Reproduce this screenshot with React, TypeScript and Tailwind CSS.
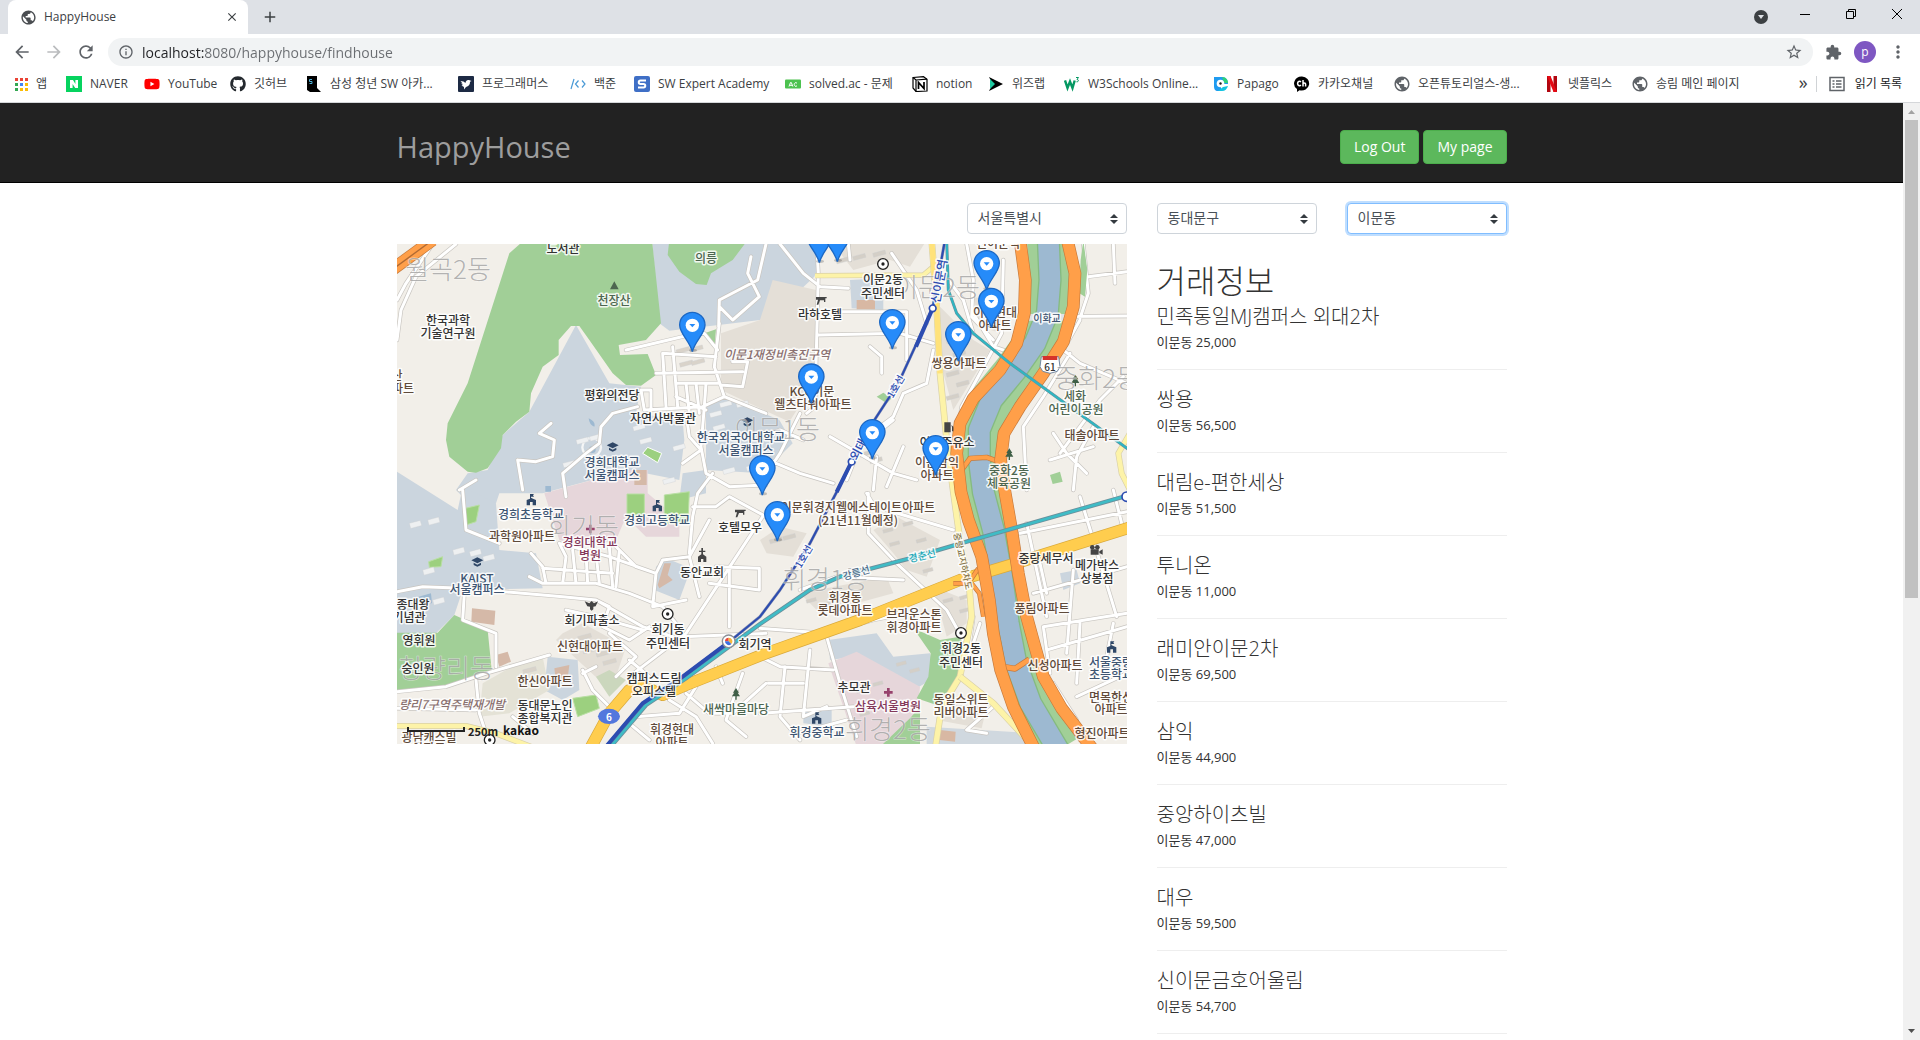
import React from "react";
import {
  MdAdd,
  MdArrowBack,
  MdArrowForward,
  MdClose,
  MdExtension,
  MdInfoOutline,
  MdMoreVert,
  MdPublic,
  MdRefresh,
  MdStarBorder,
} from "react-icons/md";
import { FaGithub, FaYoutube } from "react-icons/fa";

/* ---------- bookmark icons ---------- */

const AppsIcon = () => (
  <svg viewBox="0 0 13 13" className="size-[13px]">
    {["#ea4335", "#ea4335", "#ea4335", "#34a853", "#4285f4", "#fbbc05", "#34a853", "#fbbc05", "#fbbc05"].map((c, i) => (
      <rect key={i} x={(i % 3) * 5} y={Math.floor(i / 3) * 5} width="3" height="3" fill={c} />
    ))}
  </svg>
);
const NaverIcon = () => (
  <svg viewBox="0 0 16 16" className="size-4">
    <rect width="16" height="16" fill="#06d35f" />
    <path d="M4 4h3l2.400 4V4H12v8H9.200L6.600 8v4H4z" fill="#fff" />
  </svg>
);
const SsafyIcon = () => (
  <svg viewBox="0 0 16 16" className="size-4">
    <path d="M1 0h10v12l4 4H4l-3-2z" fill="#000" />
    <path d="M6 3.500H3.500v2H6v2H3.500" fill="none" stroke="#4fb3d9" />
  </svg>
);
const ProgrammersIcon = () => (
  <svg viewBox="0 0 16 16" className="size-4">
    <rect width="16" height="16" rx="1" fill="#1d2a44" />
    <path d="M2.500 5l3 .5 2 1.500c0-2 1.500-3.500 3.500-3l2.500 1-1.500.8c.2 3-1.500 4.700-4 5.200L6 13.500 6 11 3.500 9.500 5 9 3 7.500h1.500z" fill="#fff" />
  </svg>
);
const BaekjoonIcon = () => (
  <svg viewBox="0 0 16 16" className="size-4" fill="none" stroke="#4a9ad6" strokeWidth="1.200">
    <path d="M4 3L1 13M8.500 4.500L5.500 8l3 3.500M12 4.500L15 8l-3 3.500" />
  </svg>
);
const SwIcon = () => (
  <svg viewBox="0 0 16 16" className="size-4">
    <rect width="16" height="16" rx="2" fill="#3f6fc6" />
    <path d="M12 4.500H6.500a1.700 1.700 0 0 0 0 3.500h3a1.700 1.700 0 0 1 0 3.500H4" fill="none" stroke="#fff" strokeWidth="2" />
  </svg>
);
const SolvedIcon = () => (
  <svg viewBox="0 0 16 16" className="size-4">
    <rect y="3.500" width="16" height="9" rx="1" fill="#4cc24f" />
    <path d="M4 10.500l1.500-4h.8l1.500 4M4.700 9.300h2.400M12 7.200c-1.500-1.200-2.800-.2-2.800 1.300s1.300 2.500 2.800 1.300" fill="none" stroke="#fff" />
  </svg>
);
const NotionIcon = () => (
  <svg viewBox="0 0 16 16" className="size-4">
    <path d="M1 1.500L11.500.700 15 3.200V15l-11 .500L1 12z" fill="#fff" stroke="#000" strokeWidth="1.200" />
    <path d="M1 1.500L4 4l11-.800M4 4v11.500" fill="none" stroke="#000" strokeWidth="1.200" />
    <path d="M6.500 13V6.500l5.500 6V6" fill="none" stroke="#000" strokeWidth="1.700" />
  </svg>
);
const WizIcon = () => (
  <svg viewBox="0 0 16 16" className="size-4">
    <path d="M1 1l14 7-14 7 3.500-7z" fill="#000" />
    <path d="M2 3l5 5-5 5z" fill="#1fc9a0" />
  </svg>
);
const W3Icon = () => (
  <svg viewBox="0 0 16 16" className="size-4" fill="none" stroke="#059862">
    <path d="M1 4.500l2.500 7.500L6 5.500 8.500 12l2.200-7.500" strokeWidth="2.400" />
    <path d="M12 1.500h2.500L13 3.500c2 0 2 2.500-.5 2.300" />
  </svg>
);
const PapagoIcon = () => (
  <svg viewBox="0 0 16 16" className="size-4">
    <path d="M1 1h8c4 0 6 3 6 7H8v7H5c-3 0-4-2-4-5z" fill="#1f9bf0" />
    <path d="M9 1c4 0 6 3 6 6h-4z" fill="#2fd07a" />
    <path d="M5 15h4c3 0 5-2 6-5l-5 1z" fill="#12c3e0" />
    <circle cx="7.500" cy="7.500" r="3.800" fill="#fff" />
    <circle cx="7.500" cy="7.500" r="1.200" fill="#222" />
  </svg>
);
const KakaoIcon = () => (
  <svg viewBox="0 0 16 16" className="size-4">
    <path d="M8 .5a7.500 7 0 1 1-2.500 13.700L3 16v-3A7.500 7 0 0 1 8 .5z" fill="#000" />
    <path d="M7 5.800C5.500 4.700 3.600 5.500 3.600 7.500s1.900 2.800 3.400 1.700M9 4v6.500M9 8c.5-1.500 2.600-1.500 2.600 0v2.500" fill="none" stroke="#fff" strokeWidth="1.500" />
  </svg>
);
const NetflixIcon = () => (
  <svg viewBox="0 0 16 16" className="size-4">
    <path d="M3 0h3.500v16L3 16zM9.500 0H13v16H9.500z" fill="#b1060f" />
    <path d="M3 0h3.500L13 16H9.500z" fill="#e50914" />
  </svg>
);
const GlobeIcon = () => <MdPublic className="-mx-px size-[18px] text-[#5f6368]" />;
const NoteIcon = () => (
  <svg viewBox="0 0 16 16" className="size-4" fill="none" stroke="#5f6368" strokeWidth="1.500">
    <rect x="1" y="1.500" width="14" height="13" />
    <path d="M3.500 5h2M3.500 8h2M3.500 11h2M7 5h5.500M7 8h5.500M7 11h5.500" />
  </svg>
);

const bookmarks = [
  { label: "앱", width: "w-[51px]", icon: <AppsIcon /> },
  { label: "NAVER", width: "w-[78px]", icon: <NaverIcon /> },
  { label: "YouTube", width: "w-[86px]", icon: <FaYoutube className="size-4 text-[#f00]" /> },
  { label: "깃허브", width: "w-[76px]", icon: <FaGithub className="size-4 text-[#24292e]" /> },
  { label: "삼성 청년 SW 아카...", width: "w-[152px]", icon: <SsafyIcon /> },
  { label: "프로그래머스", width: "w-[112px]", icon: <ProgrammersIcon /> },
  { label: "백준", width: "w-[64px]", icon: <BaekjoonIcon /> },
  { label: "SW Expert Academy", width: "w-[151px]", icon: <SwIcon /> },
  { label: "solved.ac - 문제", width: "w-[127px]", icon: <SolvedIcon /> },
  { label: "notion", width: "w-[76px]", icon: <NotionIcon /> },
  { label: "위즈랩", width: "w-[76px]", icon: <WizIcon /> },
  { label: "W3Schools Online...", width: "w-[149px]", icon: <W3Icon /> },
  { label: "Papago", width: "w-[81px]", icon: <PapagoIcon /> },
  { label: "카카오채널", width: "w-[100px]", icon: <KakaoIcon /> },
  { label: "오픈튜토리얼스-생...", width: "w-[150px]", icon: <GlobeIcon /> },
  { label: "넷플릭스", width: "w-[88px]", icon: <NetflixIcon /> },
  { label: "송림 메인 페이지", width: "w-[120px]", icon: <GlobeIcon /> },
];

function TabStrip() {
  return (
    <div className="flex h-[34px] items-center bg-[#dee1e6] pl-2">
      <div className="flex h-full w-60 items-center rounded-t-lg bg-white pr-2 pl-3">
        <MdPublic className="size-[17px] shrink-0 text-[#4a4d51]" />
        <span className="ml-[7px] flex-1 text-xs text-[#3c4043]">HappyHouse</span>
        <button aria-label="탭 닫기" className="flex size-4 items-center justify-center text-[#3c4043]">
          <MdClose className="size-[14px]" />
        </button>
      </div>
      <button aria-label="새 탭" className="ml-3 flex size-5 items-center justify-center text-[#3c4043]">
        <MdAdd className="size-[18px]" />
      </button>
      <div className="ml-auto flex h-full items-start">
        <button aria-label="탭 검색" className="mt-[10px] mr-[14px] flex size-[14px] items-center justify-center rounded-full bg-[#3c4043]">
          <svg viewBox="0 0 6 4" className="h-1 w-[6px]"><path d="M0 0h6L3 4z" fill="#dee1e6" /></svg>
        </button>
        <button aria-label="최소화" className="flex h-7 w-[46px] items-center justify-center">
          <svg viewBox="0 0 10 10" className="size-[10px]"><path d="M0 5.500h10" stroke="#000" /></svg>
        </button>
        <button aria-label="이전 크기로" className="flex h-7 w-[46px] items-center justify-center">
          <svg viewBox="0 0 10 10" className="size-[10px]" fill="none" stroke="#000"><path d="M.5 2.500h7v7h-7zM2.500 2.500v-2h7v7h-2" /></svg>
        </button>
        <button aria-label="닫기" className="flex h-7 w-[46px] items-center justify-center">
          <svg viewBox="0 0 10 10" className="size-[10px]" stroke="#000"><path d="M0 0l10 10M10 0L0 10" /></svg>
        </button>
      </div>
    </div>
  );
}

function Toolbar() {
  return (
    <div className="flex h-9 items-center bg-white pl-3 text-[#5f6368]">
      <button aria-label="뒤로"><MdArrowBack className="size-5" /></button>
      <button aria-label="앞으로" className="ml-3 text-[#babcbe]"><MdArrowForward className="size-5" /></button>
      <button aria-label="새로고침" className="ml-3"><MdRefresh className="size-5" /></button>
      <div className="ml-3 flex h-7 flex-1 items-center rounded-full bg-[#f1f3f4] pr-[10px] pl-[10px]">
        <MdInfoOutline className="size-4" />
        <input
          aria-label="주소창"
          readOnly
          value="localhost:8080/happyhouse/findhouse"
          className="ml-2 h-6 flex-1 bg-[linear-gradient(90deg,#202124_62px,#6a6d71_62px)] bg-clip-text text-sm text-transparent outline-none"
        />
        <button aria-label="북마크에 추가"><MdStarBorder className="size-[18px]" /></button>
      </div>
      <button aria-label="확장 프로그램" className="ml-3"><MdExtension className="size-[17px]" /></button>
      <button aria-label="프로필" className="ml-3 size-[22px] rounded-full bg-[#7e57c2] text-xs leading-5 text-white">p</button>
      <button aria-label="메뉴" className="mx-3"><MdMoreVert className="size-5" /></button>
    </div>
  );
}

function BookmarkBar() {
  return (
    <nav className="flex h-[33px] items-center border-b border-[#d5d7da] bg-white pr-[18px] pb-1 pl-[15px] text-xs text-[#3c4043]">
      {bookmarks.map((b) => (
        <a key={b.label} href="#" className={`flex shrink-0 items-center gap-2 whitespace-nowrap ${b.width}`}>
          {b.icon}
          {b.label}
        </a>
      ))}
      <button aria-label="북마크 더보기" className="mr-2 ml-auto pb-1 text-lg leading-4">»</button>
      <a href="#" className="flex items-center gap-[10px] border-l border-[#d0d3d6] pl-3 whitespace-nowrap text-[#202124]">
        <NoteIcon />
        읽기 목록
      </a>
    </nav>
  );
}

/* ---------- map ---------- */

// Artwork is drawn on a 2190x1500 grid, three units to each map pixel.
const EAST = 1092;
const SOUTH = 750;

const pins: [number, number][] = [
  [1270, -52], [1324, -55], [889, 215], [1772, 30], [1786, 143], [1489, 207], [1687, 243],
  [1246, 370], [1429, 537], [1619, 585], [1099, 645], [1144, 783],
];

type Label = [quad: "A" | "B" | "C" | "D", x: number, y: number, text: string, tone: string];
const DARK = "#333333";
const BROWN = "#5f4a3a";
const NAVY = "#3e5572";
const GREEN = "#4d6650";
const PLUM = "#83385a";

const labels: Label[] = [
  ["A", 501, 22, "도서관", DARK], ["A", 930, 52, "의릉", GREEN], ["A", 655, 177, "천장산", GREEN],
  ["A", 155, 238, "한국과학", DARK], ["A", 156, 276, "기술연구원", DARK], ["A", 20, 440, "파트", BROWN],
  ["A", 2, 402, "산", BROWN],
  ["A", 648, 461, "평화의전당", DARK], ["A", 802, 532, "자연사박물관", DARK],
  ["A", 1034, 588, "한국외국어대학교", NAVY], ["A", 1050, 627, "서울캠퍼스", NAVY],
  ["A", 647, 663, "경희대학교", NAVY], ["A", 647, 702, "서울캠퍼스", NAVY],
  ["B", 368, 115, "이문2동", DARK], ["B", 370, 156, "주민센터", DARK], ["B", 181, 219, "라하호텔", DARK],
  ["B", 156, 450, "KCC이문", BROWN], ["B", 158, 489, "웰츠타워아파트", BROWN],
  ["B", 596, 367, "쌍용아파트", BROWN], ["B", 706, 213, "이문현대", BROWN], ["B", 706, 251, "아파트", BROWN],
  ["B", 945, 464, "세화", GREEN], ["B", 947, 503, "어린이공원", GREEN],
  ["B", 995, 582, "태솔아파트", BROWN], ["B", 560, 604, "이문주유소", DARK],
  ["B", 532, 664, "이문삼익", BROWN], ["B", 532, 702, "아파트", BROWN],
  ["B", 748, 688, "중화2동", GREEN], ["B", 748, 726, "체육공원", GREEN], ["B", 715, 6, "신이문역", BROWN],
  ["C", 405, 68, "경희초등학교", NAVY], ["C", 378, 134, "과학원아파트", BROWN], ["C", 583, 154, "경희대학교", PLUM],
  ["C", 582, 192, "병원", PLUM], ["C", 784, 87, "경희고등학교", NAVY], ["C", 1033, 107, "호텔모우", DARK],
  ["C", 918, 243, "동안교회", DARK], ["C", 242, 261, "KAIST", NAVY], ["C", 242, 295, "서울캠퍼스", NAVY],
  ["C", 50, 340, "종대왕", DARK], ["C", 38, 379, "기념관", DARK], ["C", 68, 448, "영휘원", DARK], ["C", 65, 532, "숭인원", DARK],
  ["C", 587, 387, "회기파출소", DARK], ["C", 815, 415, "회기동", DARK], ["C", 816, 457, "주민센터", DARK],
  ["C", 583, 465, "신현대아파트", BROWN], ["C", 446, 571, "한신아파트", BROWN],
  ["C", 773, 561, "캠퍼스드림", DARK], ["C", 773, 600, "오피스텔", DARK],
  ["C", 446, 642, "동대문노인", DARK], ["C", 446, 681, "종합복지관", DARK], ["C", 1020, 655, "새싹마을마당", GREEN],
  ["C", 1078, 458, "회기역", DARK], ["C", 829, 714, "휘경현대", BROWN], ["C", 829, 752, "아파트", BROWN],
  ["C", 100, 737, "광남캐스빌", BROWN], ["C", 100, 772, "아파트", BROWN],
  ["D", 295, 47, "이문휘경지웰에스테이트아파트", BROWN], ["D", 295, 88, "(21년11월예정)", BROWN],
  ["D", 254, 319, "휘경동", BROWN], ["D", 254, 357, "롯데아파트", BROWN],
  ["D", 462, 370, "브라운스톤", BROWN], ["D", 462, 408, "휘경아파트", BROWN],
  ["D", 857, 202, "중랑세무서", DARK], ["D", 1010, 222, "메가박스", DARK], ["D", 1012, 261, "상봉점", DARK],
  ["D", 845, 352, "풍림아파트", BROWN], ["D", 602, 471, "휘경2동", DARK], ["D", 603, 513, "주민센터", DARK],
  ["D", 886, 522, "신성아파트", BROWN], ["D", 1054, 512, "서울중랑", NAVY], ["D", 1054, 550, "초등학교", NAVY],
  ["D", 282, 587, "추모관", DARK], ["D", 384, 646, "삼육서울병원", PLUM], ["D", 170, 723, "휘경중학교", NAVY],
  ["D", 604, 625, "동일스위트", BROWN], ["D", 604, 663, "리버아파트", BROWN],
  ["D", 1054, 617, "면목한신", BROWN], ["D", 1054, 655, "아파트", BROWN], ["D", 1025, 727, "형진아파트", BROWN],
];

const districts: Label[] = [
  ["A", 155, 80, "월곡2동", ""], ["B", 530, 135, "이문2동", ""], ["B", 50, 560, "이문1동", ""],
  ["B", 1010, 408, "중화2동", ""], ["C", 562, 105, "회기동", ""], ["C", 150, 528, "청량리동", ""],
  ["D", 195, 262, "휘경1동", ""], ["D", 385, 712, "휘경2동", ""],
];

const place = ([quad, x, y]: Label) => ({
  x: Math.round((x + (quad === "B" || quad === "D" ? EAST : 0) - 3) / 3),
  y: Math.round((y + (quad === "C" || quad === "D" ? SOUTH : 0) - 12) / 3),
});

const westStreets =
  "M3 300L15 210L60 110L180 12M3 180L30 130L110 12M690 330L880 285L925 280L965 330M970 250L955 380L985 470L1110 520M1110 12L1085 120L970 180L968 260M1065 50L1055 100L1090 170L1010 240L970 200" +
  "M800 340L810 500M830 320L845 500M800 340L960 350M780 400L1040 395M845 430L965 430M840 470L930 510M870 430L880 520M900 430L910 520M930 430L925 500M735 450L745 510L920 500L985 470M735 450L765 450L765 510" +
  "M1010 365L1055 365L1040 440L975 435M925 500L915 620L930 700L1000 740L1110 735M870 520L880 590L915 630L860 670M725 500L650 520L615 560L610 610L570 640L500 700L510 770M365 660L420 665L470 650L475 600L430 580L465 550" +
  "M365 660L380 750M190 750L240 720M200 750L210 870L310 910M3 1055L80 1040L200 1045L500 1070L600 1080L740 1160L830 1190M400 1010L440 1030L600 1030L700 1060L800 1100L840 1150" +
  "M405 940L440 980L450 1030M490 910L510 950L500 1030M530 930L540 1030M570 940L575 1030M600 940L610 1030M640 920L650 1040M670 930L660 1040M490 910L640 950L780 1000L800 960L880 950M640 900L720 980L780 1000" +
  "M440 985L650 1000M880 940L890 830L905 760L950 700M890 800L960 800L1000 770L1110 830M940 840L880 950L910 1070M1100 830L870 1180L700 1310M960 980L1090 985L1090 1050L940 1030M1000 980L1000 1160M780 1000L770 1100L870 1080" +
  "M205 1060L200 1140L300 1180L300 1280M3 1355L150 1340L270 1300L460 1245M240 1320L250 1420L270 1480M860 1190L1110 1180M3 1405L240 1410M600 1080L640 1100L620 1160L700 1200L760 1160M510 1110L600 1130L740 1170" +
  "M640 1180L720 1250L660 1310M560 1290L590 1350L640 1400M560 1300L600 1280M700 1260L760 1310M820 1380L900 1430L950 1510M870 1360L940 1420L1010 1420L1110 1330M960 1280L980 1330M900 1340L850 1420M1040 1300L990 1440L1050 1490M720 1430L850 1420M350 1430L410 1480M700 1450L760 1500";
const eastStreets =
  "M170 12L175 100L165 500L140 520M170 215L440 215L440 360M175 285L420 280L520 310M60 12L130 100L180 140L265 145M265 12L270 60M395 40L470 150L500 250M620 12L640 120L635 230L700 300" +
  "M330 320L365 350L365 400M520 330L500 430L430 460L400 530L360 560M760 340L700 320L640 220M565 120L610 180L640 280M730 60L725 280L660 400L605 500L590 600M800 230L1101 228M960 235L985 160L970 12M985 110L1101 95M1060 12L1065 130" +
  "M960 240L910 330L960 370L1101 430M930 340L850 470L790 560L800 750M1090 410L1020 480L900 640M880 580L920 640L980 700M1000 560L950 650L940 750M870 660L1000 620M0 650L120 700L220 730M120 520L60 640L20 700M0 590L60 570L130 600M210 590L400 700L470 720" +
  "M400 540L300 620L260 720M430 620L380 740M350 650L340 750M325 760L325 880L410 970L560 1110L610 1200M380 810L580 870M0 1165L200 1180L340 1140L440 1120M120 1050L230 1010L430 1020M200 1190L240 1330L290 1490" +
  "M0 1250L60 1280L220 1290M75 1280L60 1430L120 1500M150 1230L130 1430L200 1400M25 1330L130 1330M0 1420L280 1400M350 810L320 760M110 1480L260 1440M780 880L1101 815M800 850L860 1130M820 1060L1101 980M870 1300L850 1160L1101 1120" +
  "M960 770L1000 900L1070 1130M1060 750L1090 870M960 1150L950 1330M860 1230L1101 1160M1060 1150L1030 1300M880 1330L950 1440L960 1500M950 1370L1101 1300M840 970L860 1060M940 990L920 1240M660 1150L620 1270L640 1130M700 1400L620 1470L680 1480";

const riverLine = "M865 0L870 120L862 220L825 310L765 395L695 480L658 570L658 660L670 756L700 870L725 1010L745 1150L768 1270L812 1390L895 1530";
const westBank = "M780 0L796 120L793 220L770 310L720 390L640 475L600 550L590 640L603 756L625 840L665 950L688 1080L700 1180L722 1290L760 1400L825 1530";
const eastBank = "M922 0L945 100L940 200L910 305L850 400L780 500L732 580L722 660L735 756L755 870L775 1000L800 1130L822 1210L850 1310L905 1405L1000 1530";
const trunkRoad = "M580 1530L640 1420L700 1350L740 1338L800 1365L870 1335L1110 1240L1392 1140L1692 1020L1842 975L2200 863";
const lineOne = "M1647 0L1610 205L1507 430L1432 545L1367 665L1322 756L1242 910L1152 1050L1092 1130L1000 1205L860 1310L740 1390L630 1520";
const lineTeal = "M640 1525L750 1395L870 1315L1010 1212L1092 1152L1242 1050L1332 1010L1542 955L1712 905L2200 765";
const lineEast = "M1652 0L1657 150L1682 220L1732 280L1842 370L2200 630";

function Streets({ d, casing }: { d: string; casing: boolean }) {
  return <path d={d} fill="none" stroke={casing ? "#c8c5c0" : "#ffffff"} strokeWidth={casing ? 13 : 9} strokeLinecap="round" strokeLinejoin="round" />;
}

function Cased({ d, fill, edge, w }: { d: string; fill: string; edge: string; w: number }) {
  return (
    <g fill="none" strokeLinejoin="round">
      <path d={d} stroke={edge} strokeWidth={w + 4} />
      <path d={d} stroke={fill} strokeWidth={w} />
    </g>
  );
}

const blocks = (list: [number, number][], w: number, h: number, fill: string) =>
  list.map(([x, y]) => <rect key={`${x}-${y}`} x={x} y={y} width={w} height={h} fill={fill} stroke="#c9cdd0" transform={`rotate(-15 ${x} ${y})`} />);

function GradCap({ x, y }: { x: number; y: number }) {
  return <path transform={`translate(${x} ${y})`} d="M-18 -4L0 -13L18 -4L0 5ZM-11 3L0 9L11 3V10L0 15L-11 10Z" fill="#2f4767" />;
}
function School({ x, y }: { x: number; y: number }) {
  return <path transform={`translate(${x} ${y})`} d="M-14 16V0L-4 -4V-18H8L5 -14L8 -10H-1V-7L5 -4L14 0V16H4V6H-4V16Z" fill="#2f4767" />;
}
function Tree({ x, y }: { x: number; y: number }) {
  return <path transform={`translate(${x} ${y})`} d="M0 -18L9 -4H5L12 7H2V17H-2V7H-12L-5 -4H-9Z" fill="#3f5f47" />;
}
function Office({ x, y }: { x: number; y: number }) {
  return (
    <g transform={`translate(${x} ${y})`}>
      <circle r="16" fill="#fff" stroke="#222" strokeWidth="4" />
      <circle r="5" fill="#222" />
    </g>
  );
}
function Hotel({ x, y }: { x: number; y: number }) {
  return <path transform={`translate(${x} ${y})`} d="M-16 -11H16V-7H12V4H8V-1H-4L-9 12H-14L-10 -3H-16Z" fill="#444" />;
}
function Cross({ x, y }: { x: number; y: number }) {
  return <path transform={`translate(${x} ${y})`} d="M-4 -13H4V-4H13V4H4V13H-4V4H-13V-4H-4Z" fill="#97426c" />;
}

function HouseMap() {
  return (
    <svg viewBox="0 0 730 500" className="block w-full" role="img" aria-label="이문동 지도" fontFamily='"Noto Sans CJK KR", sans-serif'>
      <defs>
        <clipPath id="map-frame"><rect width="730" height="500" /></clipPath>
      </defs>
      <g clipPath="url(#map-frame)">
        <g transform="scale(0.333333) translate(-3 -12)">
          <rect width="2200" height="1530" fill="#f2efe9" />
          {/* campuses and other tinted blocks */}
          <path d="M768 0H1300L1255 110L1170 190L1092 240L968 255L820 272L790 250Z" fill="#cbd5de" />
          <path d="M540 255L400 515L320 585L275 690L215 700L180 750L230 800L300 790L310 760L440 760L700 690L850 720L865 600L860 540L720 520L735 440L640 430Z" fill="#cbd5de" />
          <path d="M3 695L90 750L185 810L200 740L300 790L310 930L420 940L440 1045L200 1050L175 1125L120 1180H3Z" fill="#cbd5de" />
          <path d="M930 490L1000 475L1150 540L1190 610L1100 700L930 690Z" fill="#cbd5de" />
          <path d="M975 280L1092 240L1130 120L1260 150L1260 420L1180 545L1060 490L975 450Z" fill="#e4dfd7" />
          <path d="M445 760L700 690H755V760L850 840V890H750L690 830L660 900L560 920L490 900Z" fill="#e6d6da" />
          <path d="M860 700L930 690V760L850 780Z" fill="#cbd5de" />
          <path d="M780 980L810 955L885 985L850 1080L775 1050Z" fill="#cbd5de" />
          <path d="M455 1250L545 1260L550 1350L500 1380L445 1350Z" fill="#cbd5de" />
          <path d="M500 1180L560 1150L690 1220L660 1310L620 1330L480 1200Z" fill="#e4dfd7" />
          <path d="M330 1290L440 1250L460 1350L340 1420L250 1430L260 1330Z" fill="#e4e2d6" />
          <path d="M600 1310L640 1290L690 1320L640 1370Z" fill="#cbd7bd" />
          {/* parks */}
          <path d="M340 40L385 0H768L795 250L750 300L668 315L672 345L755 342L780 405L735 437L690 435L650 400L580 300L550 258H525L488 300V345L440 380L405 460L400 515L360 545L320 585L315 625L275 685L240 698L215 695L160 650L150 600L155 550L215 430Z" fill="#a1cf97" />
          <path d="M820 0L815 45L850 95L900 132L932 135L945 100L1010 60L1055 0Z" fill="#a1cf97" />
          <path d="M3 1178H125L175 1125L275 1170L288 1300L150 1335L3 1350Z" fill="#a1cf97" />
          <path d="M925 280L960 268L955 325Z" fill="#a1cf97" />
          <path d="M693 762H745V830H693ZM805 765L880 755L876 850H805ZM530 1375L600 1365L610 1405L545 1430ZM208 805L250 795L240 845L210 855ZM98 965L140 950L135 980L100 982Z" fill="#9cd07f" stroke="#b9dfa4" strokeWidth="3" />
          <path d="M740 640L755 622L797 640L785 668Z" fill="#9cd07f" stroke="#fff" strokeWidth="3" />
          <g transform="translate(1092 0)">
            <path d="M350 470L370 458L395 475L380 490Z M870 705L900 695L908 725L878 732Z" fill="#a1cf97" />
            <path d="M210 0H500L450 80L390 60L280 90Z" fill="#e4dfd7" />
            <path d="M270 120L370 115V210L275 205Z" fill="#cbd5de" />
            <path d="M290 180H345V208H290Z" fill="#d8b8a3" />
            <path d="M540 200L640 300L690 330L580 510L545 380Z" fill="#e4dfd7" />
            <path d="M640 170L720 190L725 280L660 260Z" fill="#e4dfd7" />
            <path d="M340 870L410 830L540 900L500 1010L440 990L400 940Z" fill="#e4dfd7" />
            <path d="M120 1060L380 1010L400 1060L180 1120Z" fill="#e4dfd7" />
            <path d="M0 900L60 860L140 880L100 950L20 940Z" fill="#e4dfd7" />
            <path d="M520 1040L620 1080V1150L560 1190Z" fill="#e4dfd7" />
            <path d="M205 1200L350 1180L400 1250L510 1240L528 1310L470 1345L280 1250L210 1260Z" fill="#cbd5de" />
            <path d="M205 1270L290 1235L480 1340L470 1440L370 1520H290L250 1400Z" fill="#e6d6da" />
            <path d="M460 1165L540 1200L600 1190L625 1270L600 1310L545 1400L470 1375L505 1310L512 1240Z" fill="#a1cf97" />
            <path d="M350 1530L450 1435L480 1400V1530Z" fill="#a1cf97" />
            <path d="M540 1390L680 1400L665 1465L530 1440Z" fill="#e4dfd7" />
            <path d="M500 1460L830 1480V1530H500Z" fill="#d0d8df" />
            <path d="M540 1470L587 1475L585 1505L538 1500Z" fill="#d8b8a3" />
            <path d="M130 1405H215V1460L130 1450Z" fill="#cbd5de" />
            <path d="M900 1000L950 990L960 1030L910 1050Z" fill="#cbd5de" />
          </g>
          {/* buildings */}
          <path d="M228 1105L298 1112L295 1155L226 1145ZM300 1245L335 1235L345 1265L310 1280ZM475 1285L520 1275L515 1315L480 1325ZM785 1035L805 970L825 970L815 1005L830 1020L790 1045ZM715 690H752V735H715Z" fill="#d5b9a8" />
          <path d="M68 1070L105 1060L108 1090L70 1090ZM578 535Q600 545 595 560Q580 555 578 535ZM448 738H465V755H448Z" fill="#9db9d1" />
          <circle cx="587" cy="622" r="28" fill="none" stroke="#f5f6f6" strokeWidth="7" />
          <circle cx="589" cy="629" r="10" fill="#9db9d1" />
          {blocks([[540, 600], [580, 590], [500, 670], [710, 560], [730, 600], [830, 620], [800, 720], [940, 520], [970, 490], [1020, 490], [950, 560], [1050, 680], [980, 690]], 36, 14, "#eef0f1")}
          {blocks([[40, 850], [95, 840], [170, 930], [220, 935], [260, 950], [80, 990], [110, 1080]], 34, 16, "#eef0f1")}
          {blocks([[840, 330], [880, 325], [850, 370], [885, 365], [545, 1190], [580, 1210], [560, 1230], [600, 1240], [620, 1265], [380, 1290], [400, 1320]], 40, 12, "#d9d3ca")}
          {blocks([[1320, 60], [1370, 50], [1430, 40], [1650, 300], [1670, 340], [1650, 400], [1680, 430], [1650, 470], [1390, 640], [1420, 660], [1120, 900], [1160, 890], [1750, 210], [1780, 220]], 38, 12, "#d4cfc7")}
          {blocks([[1460, 870], [1520, 850], [1480, 910], [1560, 900], [1580, 990], [1640, 1080], [1690, 1070], [1690, 1110], [1230, 1080], [1280, 1090], [1380, 1350], [1430, 1330], [1390, 1420], [1500, 1270], [1540, 1290]], 30, 10, "#d4cfc7")}
          {/* streets */}
          <Streets d={westStreets} casing />
          <g transform="translate(1092 0)"><Streets d={eastStreets} casing /></g>
          <Streets d={westStreets} casing={false} />
          <g transform="translate(1092 0)"><Streets d={eastStreets} casing={false} /></g>
          <Cased d="M-20 95L110 0" fill="#ff9f49" edge="#c67a3c" w={34} />
          <path d="M-20 95L110 0" stroke="#b06a33" strokeWidth="4" />
          <Cased d="M0 1458H210L300 1480L430 1530" fill="#fdf3a8" edge="#d9d0a8" w={14} />
          <g transform="translate(1092 0)">
            <Cased d="M165 107L490 105L520 80" fill="#fdf3a8" edge="#d9d0a8" w={12} />
            <Cased d="M515 0L530 200L540 400L560 600L580 756L600 900L628 1040L635 1130L600 1310L545 1400L525 1530" fill="#fdf3a8" edge="#d9d0a8" w={16} />
            <path d="M515 0L530 200L540 400" fill="none" stroke="#ffe27a" strokeWidth="16" />
            <Cased d="M600 1310L700 1390L830 1530" fill="#fdf3a8" edge="#d9d0a8" w={16} />
            <Cased d="M1110 580L1075 640L1085 700L1110 750" fill="#fdf3a8" edge="#d9d0a8" w={14} />
            {/* river with embankment roads */}
            <g fill="none" strokeLinejoin="round">
              <path d={riverLine} stroke="#a1cf97" strokeWidth="128" />
              <path d={riverLine} stroke="#85bb80" strokeWidth="70" />
              <path d={riverLine} stroke="#9db9d1" strokeWidth="62" />
            </g>
            <path d="M970 0L982 90L975 170L958 160L962 60Z" fill="#a1cf97" />
            <path d="M800 232H925" stroke="#dfe3e6" strokeWidth="20" />
          </g>
          <Cased d={trunkRoad} fill="#ffcd4e" edge="#d9a93a" w={32} />
          <g transform="translate(1092 0)">
            <Cased d="M605 690L630 655L680 652L725 668" fill="#ff9f49" edge="#c67a3c" w={12} />
            <Cased d="M728 1280L765 1286L808 1258" fill="#ff9f49" edge="#c67a3c" w={14} />
            <Cased d="M580 1030H625L655 985M635 1030L658 1060L670 1130" fill="#ff9f49" edge="#c67a3c" w={10} />
            <Cased d={westBank} fill="#ff9f49" edge="#c67a3c" w={34} />
            <Cased d={eastBank} fill="#ff9f49" edge="#c67a3c" w={34} />
          </g>
          {/* railways */}
          <g fill="none">
            <path d={lineTeal} stroke="#6b8f9b" strokeWidth="13" />
            <path d={lineTeal} stroke="#3fbcc6" strokeWidth="8" />
            <path d={lineEast} stroke="#6b8f9b" strokeWidth="9" />
            <path d={lineEast} stroke="#2fb6c2" strokeWidth="6" />
            <path d={lineOne} stroke="#8a93b5" strokeWidth="9" />
            <path d={lineOne} stroke="#2c4cb0" strokeWidth="6" />
            <path d="M1610 205L1560 320M1367 665L1322 756M1000 1205L860 1310L740 1390L630 1520" stroke="#2c4cb0" strokeWidth="12" />
          </g>
          <g fill="#fff" stroke="#2c4cb0" strokeWidth="5">
            <circle cx="1610" cy="205" r="10" />
            <circle cx="1367" cy="665" r="10" />
            <circle cx="2192" cy="770" r="14" />
          </g>
          <circle cx="998" cy="1204" r="19" fill="#fff" stroke="#8a8f96" strokeWidth="4" />
          <path d="M987 1204A11 11 0 0 1 998 1193V1204Z" fill="#e8463c" />
          <path d="M998 1193A11 11 0 0 1 1006 1212L998 1204Z" fill="#f6b73c" />
          <path d="M987 1204A11 11 0 0 0 1006 1212L998 1204Z" fill="#3d6fe0" />
          {/* symbols */}
          <path d="M642 148L655 124L668 148Z" fill="#4d6650" />
          <GradCap x={650} y={620} /><GradCap x={1054} y={545} /><GradCap x={244} y={965} />
          <School x={406} y={780} /><School x={784} y={798} /><School x={1262} y={1435} /><School x={2147} y={1222} />
          <Tree x={2038} y={422} /><Tree x={1840} y={643} /><Tree x={1020} y={1362} />
          <Office x={1461} y={72} /><Office x={815} y={1122} /><Office x={1695} y={1179} /><Office x={281} y={1500} />
          <Hotel x={1276} y={182} /><Hotel x={1033} y={820} />
          <Cross x={583} y={867} /><Cross x={1477} y={1357} />
          <path d="M906 966V950L916 943V936H909V932H916V924H921V932H928V936H921V943L931 950V966H922V957H915V966Z" fill="#444" />
          <path d="M566 1084L580 1090L587 1083L594 1090L606 1084L599 1099L592 1100V1108L587 1112L582 1108V1100L574 1099Z" fill="#444" />
          <path d="M1645 547H1664V577H1645ZM1666 555L1672 560V574H1668V562Z" fill="#444" />
          <path d="M2084 928H2108V944H2084ZM2110 934L2120 928V944L2110 939Z" fill="#444" />
          <circle cx="2089" cy="922" r="7" fill="#444" /><circle cx="2104" cy="922" r="7" fill="#444" />
          <path d="M1936 350H1988L1992 380L1984 394L1962 400L1940 394L1932 380Z" fill="#fff" stroke="#7389a3" strokeWidth="3" />
          <path d="M1940 348H1984V360H1940Z" fill="#d5332b" />
          <ellipse cx="639" cy="1429" rx="33" ry="23" fill="#5277dd" />
        </g>

        {/* place names */}
        <g textAnchor="middle" dominantBaseline="central" fontSize="26" fontWeight="300" fill="#a0a0a0" fillOpacity="0.8" stroke="#ffffff" strokeOpacity="0.5" strokeWidth="1" paintOrder="stroke">
          {districts.map((l) => <text key={l[3] + l[1]} {...place(l)}>{l[3]}</text>)}
        </g>
        <g textAnchor="middle" dominantBaseline="central" fontSize="12" fontWeight="500" stroke="#ffffff" strokeOpacity="0.85" strokeWidth="3" strokeLinejoin="round" paintOrder="stroke">
          {labels.map((l) => <text key={l[0] + l[1] + l[3] + l[2]} {...place(l)} fill={l[4]}>{l[3]}</text>)}
          <g fontStyle="italic" fill="#8a7070">
            <text x="380" y="109">이문1재정비촉진구역</text>
            <text x="55" y="459">량리7구역주택재개발</text>
          </g>
          <g fill="#2c4cb0">
            <text transform="translate(541 37) rotate(-80)">신이문역</text>
            <text transform="translate(463 200) rotate(-62)">외대앞</text>
            <text transform="translate(498 142) rotate(-60)" fontSize="10">1호선</text>
            <text transform="translate(406 312) rotate(-60)" fontSize="10">1호선</text>
          </g>
          <text x="650" y="73" fontSize="10" fill="#3e5572">이화교</text>
          <text transform="translate(525 311) rotate(-13)" fontSize="10" fill="#1fa9b8">경춘선</text>
          <text transform="translate(459 328) rotate(-16)" fontSize="10" fill="#4c6c8a">강릉선</text>
          <text transform="translate(566 317) rotate(78)" fontSize="9" fill="#8a7a50">중랑교지하차도</text>
        </g>
        <text x="653" y="122" fontSize="10" fontWeight="500" fill="#333333" textAnchor="middle" dominantBaseline="central">61</text>
        <text x="212" y="472" fontSize="10" fontWeight="700" fill="#ffffff" textAnchor="middle" dominantBaseline="central">6</text>

        {/* scale bar */}
        <path d="M11 483V487H67V483" fill="none" stroke="#222" strokeWidth="2" />
        <text x="71" y="492" fontSize="11" fontWeight="700" fill="#222">250m</text>
        <text x="106" y="491" fontSize="12" fontWeight="700" fill="#111">kakao</text>

        {/* listings */}
        <g transform="scale(0.333333) translate(-3 -12)">
          {pins.map(([x, y]) => (
            <g key={`${x},${y}`} transform={`translate(${x} ${y})`}>
              <ellipse cx="2" cy="116" rx="12" ry="5" fill="#000" opacity="0.2" />
              <path d="M0 2A38 38 0 0 1 38 40C38 66 8 88 0 120C-8 88 -38 66 -38 40A38 38 0 0 1 0 2Z" fill="#268bf9" stroke="#1c68c4" strokeWidth="4" />
              <circle cy="41" r="20" fill="#fff" />
              <path d="M-9 37H9L0 47Z" fill="#268bf9" />
            </g>
          ))}
        </g>
      </g>
    </svg>
  );
}

/* ---------- page ---------- */

function AreaSelect({ label, value, focused = false }: { label: string; value: string; focused?: boolean }) {
  return (
    <div className="relative">
      <select
        aria-label={label}
        defaultValue={value}
        className={`h-[31px] w-full appearance-none rounded-sm border bg-white px-[10px] pb-[2px] text-sm leading-5 text-[#495057] outline-none ${
          focused ? "border-[#80bdff] shadow-[0_0_0_2px_#bfdeff]" : "border-[#ced4da]"
        }`}
      >
        <option>{value}</option>
      </select>
      <svg viewBox="0 0 8 10" className="pointer-events-none absolute top-[11px] right-[9px] h-[10px] w-2">
        <path d="M4 0l4 4H0zM4 10l4-4H0z" fill="#343a40" />
      </svg>
    </div>
  );
}

const deals = [
  ["민족통일MJ캠퍼스 외대2차", "25,000"],
  ["쌍용", "56,500"],
  ["대림e-편한세상", "51,500"],
  ["투니온", "11,000"],
  ["래미안이문2차", "69,500"],
  ["삼익", "44,900"],
  ["중앙하이츠빌", "47,000"],
  ["대우", "59,500"],
  ["신이문금호어울림", "54,700"],
];

function SiteHeader() {
  return (
    <header className="border-b border-black bg-[#222222]">
      <div className="mx-auto flex h-[79px] max-w-[1110px] items-center justify-between pt-2">
        <a href="#" className="text-[29px] leading-9 text-[#9d9d9d]">HappyHouse</a>
        <div className="flex gap-1">
          <button className="h-[34px] rounded border border-[#4cae4c] bg-[#5cb85c] px-[13px] text-sm text-white">Log Out</button>
          <button className="h-[34px] rounded border border-[#4cae4c] bg-[#5cb85c] px-[13px] text-sm text-white">My page</button>
        </div>
      </div>
    </header>
  );
}

function ScrollBar() {
  return (
    <div className="flex w-[17px] shrink-0 flex-col items-center bg-[#f1f1f1]">
      <svg viewBox="0 0 17 17" className="size-[17px]"><path d="M5 11l3.500-4 3.500 4z" fill="#a3a3a3" /></svg>
      <div className="h-[51%] w-[13px] bg-[#c1c1c1]" />
      <svg viewBox="0 0 17 17" className="mt-auto size-[17px]"><path d="M5 6l3.500 4L12 6z" fill="#505050" /></svg>
    </div>
  );
}

export default function App() {
  return (
    <div className='flex h-screen flex-col overflow-hidden bg-white font-["Open_Sans","Noto_Sans_CJK_KR",sans-serif]'>
      <TabStrip />
      <Toolbar />
      <BookmarkBar />
      <div className="flex min-h-0 flex-1">
        <div className="min-w-0 flex-1 overflow-hidden">
          <SiteHeader />
          <main className="mx-auto max-w-[1110px] pt-5 text-[#333333]">
            <form className="ml-auto grid w-[540px] grid-cols-3 gap-[30px]">
              <AreaSelect label="시도" value="서울특별시" />
              <AreaSelect label="구군" value="동대문구" />
              <AreaSelect label="동" value="이문동" focused />
            </form>
            <div className="mt-[10px] grid grid-cols-[730fr_350fr] items-start gap-[30px]">
              <HouseMap />
              <section className="pt-[18px]">
                <h3 className="mb-[5px] text-[32px] leading-[38px] font-light">거래정보</h3>
                <ul>
                  {deals.map(([name, price]) => (
                    <li key={name} className="mb-[18px] border-b border-[#eeeeee] pb-[14px]">
                      <h4 className="text-xl leading-6 font-light">{name}</h4>
                      <p className="text-[13px] leading-[26px]">이문동 {price}</p>
                    </li>
                  ))}
                </ul>
              </section>
            </div>
          </main>
        </div>
        <ScrollBar />
      </div>
    </div>
  );
}
